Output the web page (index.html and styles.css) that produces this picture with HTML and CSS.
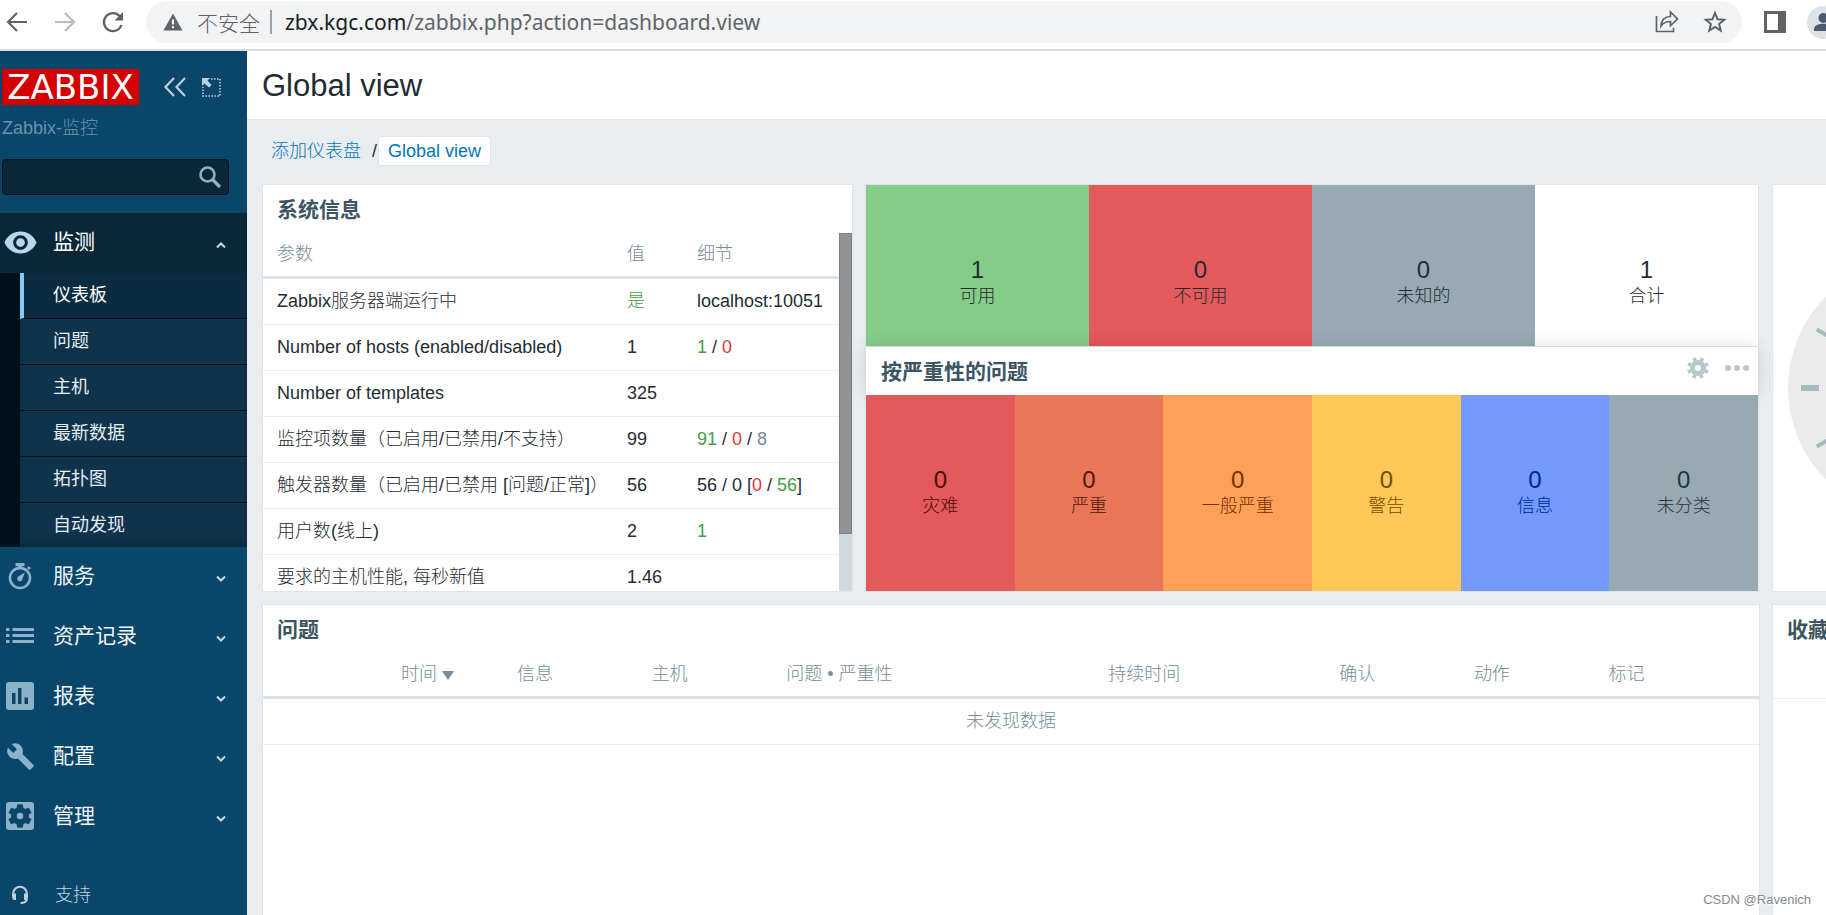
FILE: index.html
```html
<!DOCTYPE html>
<html lang="zh-CN">
<head>
<meta charset="utf-8">
<title>Global view</title>
<link rel="stylesheet" href="styles.css">
</head>
<body>
<header class="browser">
  <div class="browser-nav">
    <button class="icon-btn" aria-label="后退"><svg width="24" height="24" viewBox="0 0 24 24" fill="none" stroke="#5f6368" stroke-width="2.2"><path d="M22 12H3.500M12 3L3 12l9 9"/></svg></button>
    <button class="icon-btn" aria-label="前进"><svg width="24" height="24" viewBox="0 0 24 24" fill="none" stroke="#b9bbbe" stroke-width="2.200"><path d="M2 12h18.500M12 3l9 9-9 9"/></svg></button>
    <button class="icon-btn" aria-label="刷新"><svg width="24" height="24" viewBox="0 0 24 24"><path d="M19 6.500A9 9 0 1 0 20.500 15" fill="none" stroke="#5f6368" stroke-width="2.300"/><path d="M22 2v8.500h-8.500z" fill="#5f6368"/></svg></button>
  </div>
  <div class="omnibox">
    <svg width="20" height="18" viewBox="0 0 20 18"><path d="M10 .5L19.500 17.500H.5z" fill="#5f6368"/><path d="M10 6.500v5M10 13v2.200" stroke="#f1f3f4" stroke-width="2.200"/></svg>
    <span class="insecure">不安全</span>
    <span class="omni-sep"></span>
    <span class="url"><b>zbx.kgc.com</b>/zabbix.php?action=dashboard.view</span>
    <button class="icon-btn share" aria-label="分享"><svg width="24" height="24" viewBox="0 0 24 24" fill="none" stroke="#5f6368" stroke-width="1.700"><path d="M1.500 6v15.500h17V18"/><path d="M6 16c.5-6 4-9.500 9.500-9.500V2l7 7-7 6.500V11.500c-4.500 0-7 1-9.500 4.500z"/></svg></button>
    <button class="icon-btn" aria-label="收藏"><svg width="24" height="24" viewBox="0 0 24 24" fill="none" stroke="#5f6368" stroke-width="2"><path d="M12 3l2.500 6.200 6.700.5-5.100 4.300 1.600 6.500L12 17l-5.700 3.500 1.600-6.500-5.100-4.300 6.700-.5z"/></svg></button>
  </div>
  <button class="icon-btn panel-btn" aria-label="侧边栏"><svg width="22" height="22" viewBox="0 0 22 22"><rect x="1.500" y="1.500" width="19" height="19" fill="#fff" stroke="#5f6368" stroke-width="3"/><path d="M14 1h7v20h-7z" fill="#5f6368"/></svg></button>
  <button class="icon-btn avatar" aria-label="用户"><svg width="33" height="33" viewBox="0 0 33 33"><circle cx="16.500" cy="16.500" r="16.500" fill="#dee1e6"/><circle cx="16.500" cy="12" r="5" fill="#4c5a72"/><path d="M7 25v-2c0-7 19-7 19 0v2z" fill="#4c5a72"/></svg></button>
</header>

<div class="app">
  <aside class="sidebar">
    <div class="brand">
      <a class="logo" href="#">ZABBIX</a>
      <button class="icon-btn" aria-label="折叠"><svg width="24" height="20" viewBox="0 0 24 20" fill="none" stroke="#bdd0dc" stroke-width="2.200"><path d="M11 1L2.500 10l8.500 9M22 1l-8.500 9 8.500 9"/></svg></button>
      <button class="icon-btn" aria-label="隐藏"><svg width="20" height="20" viewBox="0 0 20 20"><path d="M10 2h9v17H2V10" fill="none" stroke="#bdd0dc" stroke-width="1.600" stroke-dasharray="1.600 1.400"/><path d="M1 1h8L6.500 3.500l4 4.500L8 10.500 3.500 6.500 1 9z" fill="#bdd0dc"/></svg></button>
    </div>
    <div class="server">Zabbix-监控</div>
    <div class="search">
      <input type="text" aria-label="搜索">
      <button class="icon-btn" aria-label="搜索"><svg width="24" height="24" viewBox="0 0 24 24" fill="none" stroke="#8fb2ca"><circle cx="9.500" cy="9.500" r="7" stroke-width="2.600"/><path d="M14.500 14.500l7.500 7.500" stroke-width="3.200"/></svg></button>
    </div>
    <nav class="menu">
      <button class="menu-item active"><span class="menu-icon"><svg width="35" height="35" viewBox="0 0 24 24" fill="#b8d5eb"><path d="M12 4.500C7 4.500 2.730 7.610 1 12c1.730 4.390 6 7.500 11 7.500s9.270-3.110 11-7.500c-1.730-4.390-6-7.500-11-7.500zM12 17c-2.760 0-5-2.240-5-5s2.240-5 5-5 5 2.240 5 5-2.240 5-5 5zm0-8c-1.660 0-3 1.340-3 3s1.340 3 3 3 3-1.340 3-3-1.340-3-3-3z"/></svg></span><span>监测</span><svg class="chev" width="10" height="8" viewBox="0 0 10 8"><path d="M1 6.500l4-4 4 4"/></svg></button>
      <div class="submenu">
        <a class="current" href="#">仪表板</a>
        <a href="#">问题</a>
        <a href="#">主机</a>
        <a href="#">最新数据</a>
        <a href="#">拓扑图</a>
        <a href="#">自动发现</a>
      </div>
      <button class="menu-item"><span class="menu-icon"><svg width="28" height="28" viewBox="0 0 28 28" fill="#8cb1cb"><circle cx="14" cy="16" r="10" fill="none" stroke="#8cb1cb" stroke-width="2.600"/><path d="M9.500 1h9v3.200h-2.500v2.500h-4V4.200H9.500zM21 6l1.800-2 2 2-1.800 2zM18.800 10.600l-2.300 6.600a2.700 2.700 0 1 1-3.800-3z"/></svg></span><span>服务</span><svg class="chev" width="10" height="8" viewBox="0 0 10 8"><path d="M1 1.500l4 4 4-4"/></svg></button>
      <button class="menu-item"><span class="menu-icon"><svg width="28" height="28" viewBox="0 0 28 28" fill="#8cb1cb"><path d="M0 6h3.500v3H0zM6.500 6H28v3H6.500zM0 12h3.500v3H0zM6.500 12H28v3H6.500zM0 18h3.500v3H0zM6.500 18H28v3H6.500z"/></svg></span><span>资产记录</span><svg class="chev" width="10" height="8" viewBox="0 0 10 8"><path d="M1 1.500l4 4 4-4"/></svg></button>
      <button class="menu-item"><span class="menu-icon"><svg width="28" height="28" viewBox="0 0 28 28"><rect width="28" height="28" rx="3" fill="#8cb1cb"/><path d="M6 11h3.500v11H6zM12 6h3.500v16H12zM18.500 15.500H22V22h-3.500z" fill="#0a466a"/></svg></span><span>报表</span><svg class="chev" width="10" height="8" viewBox="0 0 10 8"><path d="M1 1.500l4 4 4-4"/></svg></button>
      <button class="menu-item"><span class="menu-icon"><svg width="29" height="29" viewBox="0 0 24 24" fill="#8cb1cb"><path d="M22.700 19l-9.100-9.100c.9-2.300.4-5-1.500-6.900-2-2-5-2.400-7.400-1.300L9 6 6 9 1.600 4.700C.4 7.100.9 10.100 2.900 12.100c1.900 1.900 4.600 2.400 6.900 1.500l9.100 9.100c.4.4 1 .4 1.400 0l2.300-2.300c.5-.4.5-1.100.1-1.400z"/></svg></span><span>配置</span><svg class="chev" width="10" height="8" viewBox="0 0 10 8"><path d="M1 1.500l4 4 4-4"/></svg></button>
      <button class="menu-item"><span class="menu-icon"><svg width="28" height="28" viewBox="0 0 28 28"><rect width="28" height="28" rx="3" fill="#8cb1cb"/><path transform="translate(-.7 -.7) scale(1.225)" fill="#0a466a" d="M19.140 12.940c.04-.3.060-.61.060-.94 0-.32-.02-.64-.07-.94l2.030-1.580c.18-.14.230-.41.120-.61l-1.920-3.320c-.12-.22-.37-.29-.59-.22l-2.390.960c-.5-.38-1.030-.7-1.620-.94l-.36-2.540c-.04-.24-.24-.41-.48-.41h-3.840c-.24 0-.43.170-.47.410l-.36 2.540c-.59.240-1.130.570-1.620.940l-2.390-.96c-.22-.08-.47 0-.59.220L2.740 8.870c-.12.210-.08.470.120.610l2.030 1.580c-.05.300-.09.630-.09.940s.02.640.070.940l-2.030 1.580c-.18.140-.23.410-.12.610l1.920 3.320c.12.220.37.290.59.220l2.390-.96c.5.380 1.030.7 1.620.940l.36 2.540c.05.240.24.410.48.410h3.840c.24 0 .44-.17.470-.41l.36-2.540c.59-.24 1.130-.56 1.620-.94l2.390.960c.22.080.47 0 .59-.22l1.920-3.320c.12-.22.070-.47-.12-.61l-2.010-1.580z"/><circle cx="14" cy="14" r="3.300" fill="#8cb1cb"/></svg></span><span>管理</span><svg class="chev" width="10" height="8" viewBox="0 0 10 8"><path d="M1 1.500l4 4 4-4"/></svg></button>
    </nav>
    <a class="support" href="#"><span class="menu-icon"><svg width="18" height="20" viewBox="0 0 18 20"><path d="M2.200 11V8.500a6.800 6.800 0 0 1 13.600 0V14c0 2.500-2 4-6.300 4" fill="none" stroke="#bdd0dc" stroke-width="2"/><path d="M1.200 8.500H5V15H3.500a2.300 2.300 0 0 1-2.300-2.300zM13 8.500h3.800v4.200a2.300 2.300 0 0 1-2.300 2.300H13z" fill="#bdd0dc"/></svg></span><span>支持</span></a>
  </aside>

  <main class="main">
    <header class="page-head"><h1>Global view</h1></header>
    <nav class="crumbs"><a href="#">添加仪表盘</a><span>/</span><a class="crumb-current" href="#">Global view</a></nav>
    <div class="dashboard">
      <section class="widget system">
        <h2>系统信息</h2>
        <div class="scroller">
          <table class="list system-table">
            <colgroup><col class="c-param"><col class="c-value"><col></colgroup>
            <thead><tr><th>参数</th><th>值</th><th>细节</th></tr></thead>
            <tbody>
              <tr><td>Zabbix服务器端运行中</td><td><span class="green">是</span></td><td>localhost:10051</td></tr>
              <tr><td>Number of hosts (enabled/disabled)</td><td>1</td><td><span class="green">1</span> / <span class="red">0</span></td></tr>
              <tr><td>Number of templates</td><td>325</td><td></td></tr>
              <tr><td>监控项数量（已启用/已禁用/不支持）</td><td>99</td><td><span class="green">91</span> / <span class="red">0</span> / <span class="grey">8</span></td></tr>
              <tr><td>触发器数量（已启用/已禁用 [问题/正常]）</td><td>56</td><td>56 / 0 [<span class="red">0</span> / <span class="green">56</span>]</td></tr>
              <tr><td>用户数(线上)</td><td>2</td><td><span class="green">1</span></td></tr>
              <tr><td>要求的主机性能, 每秒新值</td><td>1.46</td><td></td></tr>
            </tbody>
          </table>
          <div class="track"><div class="thumb"></div></div>
        </div>
      </section>

      <div class="stack">
        <section class="widget hosts">
          <div class="tile available"><strong>1</strong><span>可用</span></div>
          <div class="tile unavailable"><strong>0</strong><span>不可用</span></div>
          <div class="tile unknown"><strong>0</strong><span>未知的</span></div>
          <div class="tile total"><strong>1</strong><span>合计</span></div>
        </section>
        <section class="widget severity">
          <div class="severity-head">
            <h2>按严重性的问题</h2>
            <button class="icon-btn" aria-label="编辑"><svg width="22" height="22" viewBox="0 0 22 22"><circle cx="11" cy="11" r="5.500" fill="none" stroke="#b9c6cd" stroke-width="5"/><circle cx="11" cy="11" r="9.200" fill="none" stroke="#b9c6cd" stroke-width="3.400" stroke-dasharray="3.613 3.613" stroke-dashoffset="-1.800"/></svg></button>
            <button class="icon-btn" aria-label="更多"><svg width="24" height="8" viewBox="0 0 24 8" fill="#b9c6cd"><circle cx="3" cy="4" r="3"/><circle cx="12" cy="4" r="3"/><circle cx="21" cy="4" r="3"/></svg></button>
          </div>
          <div class="severity-tiles">
            <div class="tile disaster"><strong>0</strong><span>灾难</span></div>
            <div class="tile high"><strong>0</strong><span>严重</span></div>
            <div class="tile average"><strong>0</strong><span>一般严重</span></div>
            <div class="tile warning"><strong>0</strong><span>警告</span></div>
            <div class="tile info"><strong>0</strong><span>信息</span></div>
            <div class="tile unclassified"><strong>0</strong><span>未分类</span></div>
          </div>
        </section>
      </div>

      <section class="widget clock">
        <svg width="260" height="260" viewBox="0 0 260 260"><circle cx="130" cy="130" r="130" fill="#ebebeb"/><g stroke="#a9b9c2"><path d="M13 130h18M229 130h18M130 13v18M130 229v18" stroke-width="6"/><path d="M28.700 71.500l15.600 9M28.700 188.500l15.600-9M71.500 28.700l9 15.600M188.500 28.700l-9 15.600M231.300 71.500l-15.600 9M231.300 188.500l-15.600-9M71.500 231.300l9-15.600M188.500 231.300l-9-15.600" stroke-width="4"/></g></svg>
      </section>

      <section class="widget problems">
        <h2>问题</h2>
        <table class="list problems-table">
          <colgroup><col class="p-blank"><col class="p-time"><col class="p-mid"><col class="p-mid"><col class="p-problem"><col class="p-duration"><col class="p-mid"><col class="p-mid"><col></colgroup>
          <thead><tr><th></th><th class="time-head">时间<span class="sort"></span></th><th>信息</th><th>主机</th><th>问题 • 严重性</th><th>持续时间</th><th>确认</th><th>动作</th><th>标记</th></tr></thead>
          <tbody><tr><td class="empty" colspan="9">未发现数据</td></tr></tbody>
        </table>
      </section>

      <section class="widget favourites">
        <h2>收藏</h2>
        <div class="fav-line"></div>
      </section>
    </div>
  </main>
</div>
<div class="watermark">CSDN @Ravenich</div>
</body>
</html>
```
FILE: styles.css
```css
* { box-sizing: border-box; }
body {
  margin: 0;
  height: 100vh;
  display: flex;
  flex-direction: column;
  overflow: hidden;
  font: 300 18px/24px "Liberation Sans", "Noto Sans CJK SC", sans-serif;
  color: #1f2c33;
  background: #e9edf0;
}
a { color: #0275b8; text-decoration: none; }
h1, h2 { margin: 0; }
svg { display: block; flex: none; }
button { font: inherit; color: inherit; border: 0; background: none; padding: 0; }
.icon-btn { flex: none; }

/* browser toolbar */
.browser {
  flex: none;
  display: flex;
  align-items: flex-start;
  height: 51px;
  padding-top: 1px;
  border-bottom: 2px solid #dadce0;
  background: #fff;
}
.browser-nav { display: flex; gap: 24px; padding: 9px 20px 0 5px; }
.browser-nav + .omnibox { margin-left: 1px; }
.omnibox {
  flex: 1;
  display: flex;
  align-items: center;
  height: 42px;
  padding: 0 15px 0 17px;
  border-radius: 21px;
  background: #f1f3f4;
  font: 21px/28px "Noto Sans", "Noto Sans CJK SC", sans-serif;
  color: #5f6368;
}
.insecure { margin-left: 14px; font-family: "Noto Sans CJK SC", sans-serif; font-weight: 300; }
.omni-sep { width: 2px; height: 24px; margin: 0 13px 0 10px; background: #9aa0a6; }
.url { flex: 1; white-space: nowrap; }
.url b { font-weight: 400; color: #202124; }
.share { margin-right: 24px; }
.panel-btn { margin: 10px 21px 0 22px; }
.avatar { width: 19px; overflow: hidden; margin-top: 5px; }

.app { flex: 1; display: flex; min-height: 0; }

/* sidebar */
.sidebar { flex: none; width: 247px; background: #0a466a; color: #fff; overflow: hidden; }
.brand { display: flex; align-items: center; padding: 18px 0 0 2px; }
.logo {
  width: 137px;
  margin-right: 24px;
  font: 34px/36px "DejaVu Sans", sans-serif;
  text-align: center;
  color: #fff;
  background: #d40000;
}
.brand .icon-btn + .icon-btn { margin-left: 14px; }
.server { padding: 11px 2px 0; color: #6c92ab; }
.search {
  display: flex;
  align-items: center;
  height: 36px;
  margin: 19px 18px 18px 2px;
  padding-right: 6px;
  border: 1px solid #02111b;
  border-radius: 4px;
  background: #0a2737;
}
.search input { flex: 1; min-width: 0; border: 0; outline: 0; background: none; color: #fff; font: inherit; }
.menu-item {
  display: flex;
  align-items: center;
  width: 100%;
  height: 60px;
  padding: 0 21px 2px 0;
  font-size: 21px;
  font-weight: 400;
  text-align: left;
  color: #eef4f8;
}
.menu-item.active { background: #0a2737; color: #fff; }
.menu-icon { width: 40px; margin-right: 13px; display: flex; justify-content: center; flex: none; }
.chev { margin: 6px 0 0 auto; fill: none; stroke: #c6d9e5; stroke-width: 2; }
.submenu { border-left: 20px solid #01111b; background: #10334c; box-shadow: inset 0 9px 9px -7px #0a2737, inset 0 -9px 9px -7px #0a2737; }
.submenu a {
  display: block;
  height: 46px;
  padding-left: 33px;
  border-bottom: 1px solid #03121c;
  line-height: 44px;
  font-weight: 400;
  color: #e3ecf2;
}
.submenu a:last-child { height: 44px; border-bottom: 0; }
.submenu .current { padding-left: 29px; border-left: 4px solid #86c9f9; background: #0b2c40; color: #fff; }
.support { display: flex; align-items: center; margin-top: 36px; height: 24px; color: #c2d5e1; }
.support .menu-icon { margin-right: 15px; }

/* page */
.main { flex: 1; min-width: 0; display: flex; flex-direction: column; }
.page-head { padding: 17px 15px 15px; border-bottom: 1px solid #dfe4e7; background: #fff; }
h1 { font: 400 31px/36px "Liberation Sans", sans-serif; }
.crumbs { display: flex; align-items: center; padding: 16px 24px 18px; }
.crumbs span { margin: 0 1px 0 11px; }
.crumb-current { padding: 2px 9px; border: 1px solid #dfe4e7; border-radius: 3px; background: #fff; }

.dashboard {
  flex: 1;
  min-height: 0;
  display: grid;
  grid-template-columns: 591fr 895fr 54fr;
  grid-template-rows: 408px 1fr;
  gap: 12px;
  padding-left: 15px;
}
.widget { min-width: 0; border: 1px solid #dfe4e7; background: #fff; overflow: hidden; }
h2 { font-size: 21px; line-height: 28px; color: #3c5563; padding: 11px 14px 9px; white-space: nowrap; }

.list { width: 100%; border-collapse: separate; border-spacing: 0; table-layout: fixed; }
.list th { height: 46px; padding: 0 8px 2px; border-bottom: 3px solid #dce2e5; font-weight: 300; text-align: left; color: #768d99; white-space: nowrap; }
.list td { height: 46px; padding: 0 8px 2px; border-bottom: 1px solid #ebeef0; white-space: nowrap; }

.system { display: flex; flex-direction: column; }
.scroller { flex: 1; min-height: 0; display: flex; overflow: hidden; }
.system-table { flex: 1; align-self: flex-start; }
.system-table th:first-child, .system-table td:first-child { padding-left: 14px; }
.c-param { width: 356px; }
.c-value { width: 70px; }
.track { flex: none; width: 13px; background: #d0d9de; }
.thumb { height: 84%; border: 1px solid #7d7f81; background: #919294; }
.green { color: #429e47; }
.red { color: #e33734; }
.grey { color: #768d99; }

.stack { display: flex; flex-direction: column; min-width: 0; padding-right: 1px; }
.hosts { display: flex; height: 163px; flex: none; border-bottom: 0; }
.hosts .tile { padding-top: 34px; }
.tile { flex: 1; display: flex; flex-direction: column; align-items: center; justify-content: center; line-height: 26px; }
.tile strong { font: 400 24px/26px "Liberation Sans", sans-serif; }
.severity { position: relative; flex: 1; margin-top: -1px; display: flex; flex-direction: column; overflow: visible; }
.severity-head { display: flex; align-items: flex-start; padding-right: 9px; box-shadow: 0 0 18px rgba(0, 0, 0, 0.12); }
.severity-head h2 { flex: 1; padding-left: 15px; }
.severity-head .icon-btn { display: flex; align-items: center; height: 42px; }
.severity-head .icon-btn + .icon-btn { margin-left: 16px; }
.severity-tiles { flex: 1; display: flex; position: relative; }
.available { background: #86cc89; }
.unavailable { background: #e45959; }
.unknown { background: #97aab3; }
.disaster { background: #e45959; color: #4b0c0c; }
.high { background: #e97659; color: #52190b; }
.average { background: #ffa059; color: #733100; }
.warning { background: #ffc859; color: #734d00; }
.info { background: #7499ff; color: #00268e; }
.unclassified { background: #97aab3; color: #2a353a; }

.clock { display: flex; align-items: center; padding-left: 15px; border-right: 0; }
.problems { grid-column: 1 / 3; border-bottom: 0; }
.p-blank { width: 130px; }
.p-time { width: 116px; }
.p-mid { width: 9%; }
.p-problem { width: 322px; }
.p-duration { width: 231px; }
.sort { display: inline-block; margin-left: 5px; border: 6px solid transparent; border-top: 9px solid #768d99; border-bottom: 0; }
.list .empty { padding: 0 0 2px; text-align: center; color: #768d99; }
.favourites { border-right: 0; border-bottom: 0; }
.fav-line { height: 46px; border-bottom: 1px solid #e9edf0; }

.watermark { position: absolute; right: 15px; bottom: 5px; font-size: 13px; line-height: 20px; color: #85898c; text-shadow: 1px 1px 1px #fff; }
```
